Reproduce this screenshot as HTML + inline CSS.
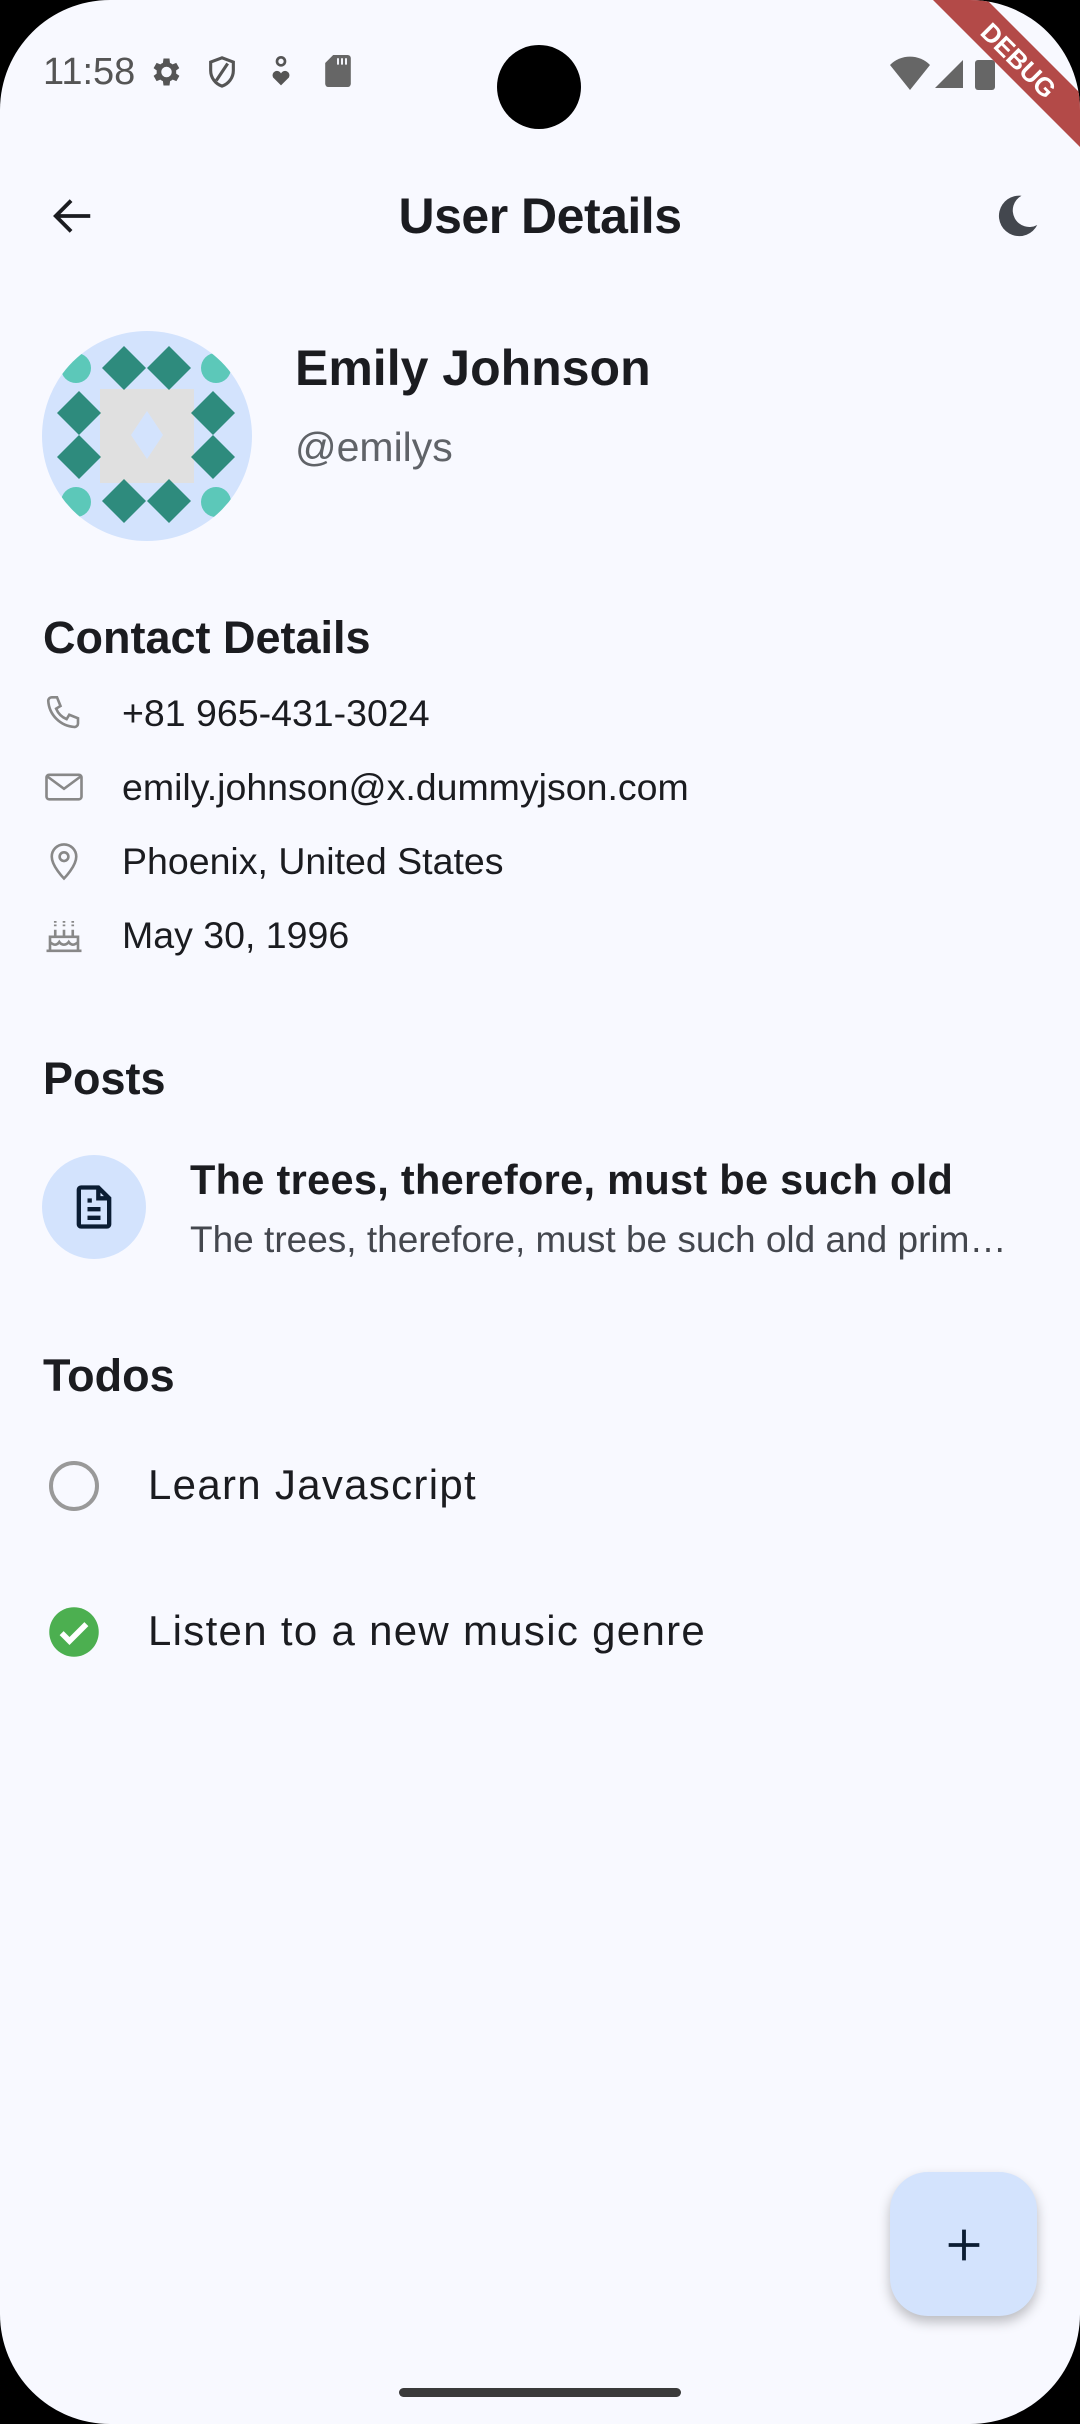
<!DOCTYPE html>
<html><head><meta charset="utf-8"><style>
*{margin:0;padding:0;box-sizing:border-box}
html,body{width:1080px;height:2424px;background:#000;overflow:hidden}
#s{position:absolute;left:0;top:0;width:1080px;height:2424px;background:#f8f9ff;border-radius:110px 110px 110px 110px;overflow:hidden;font-family:"Liberation Sans",Roboto,sans-serif;color:#1b1c20}
.a{position:absolute;white-space:nowrap}
.h{font-size:45px;font-weight:bold;left:43px}
.ct{left:122px;font-size:37.5px;color:#1b1c20}
.ic{position:absolute;left:43px}
</style></head><body><div id="s">
<div class="a" style="left:43px;top:51px;font-size:38px;color:#555">11:58</div>
<svg class="a" style="left:145px;top:54px" width="40" height="36" viewBox="0 0 24 24"><path fill="#555" d="M19.4 13a7.5 7.5 0 0 0 0-2l2.1-1.6-2-3.5-2.5 1a7 7 0 0 0-1.7-1L15 3h-4l-.4 2.9a7 7 0 0 0-1.7 1l-2.5-1-2 3.5L6.5 11a7.5 7.5 0 0 0 0 2l-2.1 1.6 2 3.5 2.5-1a7 7 0 0 0 1.7 1L11 21h4l.4-2.9a7 7 0 0 0 1.7-1l2.5 1 2-3.5zM13 15.5a3.5 3.5 0 1 1 0-7 3.5 3.5 0 0 1 0 7z"/></svg>
<svg class="a" style="left:205px;top:54px" width="34" height="36" viewBox="0 0 24 24"><path fill="none" stroke="#555" stroke-width="2.2" d="M12 2 4 5v6c0 5 3.4 9.5 8 11 4.6-1.5 8-6 8-11V5z M8 18 16 6"/></svg>
<svg class="a" style="left:270px;top:56px" width="22" height="32" viewBox="0 0 16 24"><circle cx="8" cy="4" r="3" fill="none" stroke="#555" stroke-width="2"/><path fill="#555" d="M8 22 2 16a3 3 0 0 1 6-3 3 3 0 0 1 6 3z"/></svg>
<svg class="a" style="left:325px;top:55px" width="26" height="32" viewBox="0 0 16 20"><path fill="#666" d="M5 0h9a2 2 0 0 1 2 2v16a2 2 0 0 1-2 2H2a2 2 0 0 1-2-2V5z"/><path stroke="#f8f9ff" stroke-width="1.2" d="M8 2v4M10.5 2v4M13 2v4"/></svg>
<div class="a" style="left:497px;top:45px;width:84px;height:84px;border-radius:50%;background:#000"></div>
<svg class="a" style="left:890px;top:54px" width="140" height="36" viewBox="0 0 140 36"><path fill="#666" d="M0 11a28 28 0 0 1 40 0L20 36z"/><path fill="#666" d="M45 34 73 6v28z"/><rect x="85" y="6" width="20" height="30" rx="3" fill="#666"/></svg>
<svg class="a" style="left:0;top:0" width="1080" height="200"><polygon points="933,0 987,0 1080,93 1080,147" fill="#b34a48"/><text x="1017" y="62" transform="rotate(45 1017 62)" text-anchor="middle" dominant-baseline="middle" font-family="Liberation Sans" font-weight="bold" font-size="26" fill="#fff">DEBUG</text></svg>
<svg class="a" style="left:50px;top:193px" width="46" height="46" viewBox="0 0 24 24"><path fill="none" stroke="#1b1c20" stroke-width="2" d="M21 12H4M11 4l-8 8 8 8"/></svg>
<div class="a" style="left:0;width:1080px;text-align:center;top:187px;font-size:50px;font-weight:bold;letter-spacing:-0.5px">User Details</div>
<svg class="a" style="left:990px;top:189px" width="54" height="54" viewBox="0 0 24 24"><path fill="#43474e" d="M14 3a9 9 0 1 0 7 13A7 7 0 0 1 14 3z"/></svg>
<svg class="a" style="left:42px;top:331px" width="210" height="210" viewBox="42 331 210 210"><defs><clipPath id="c"><circle cx="147" cy="436" r="105"/></clipPath></defs><circle cx="147" cy="436" r="105" fill="#d3e3fd"/><g clip-path="url(#c)"><g fill="#5cc8b9"><circle cx="76" cy="368" r="15"/><circle cx="216" cy="368" r="15"/><circle cx="76" cy="502" r="15"/><circle cx="216" cy="502" r="15"/></g><rect x="100" y="389" width="94" height="94" fill="#e0e0e0"/><polygon points="147,411 163,435 147,459 131,435" fill="#d3e3fd"/><g fill="#2e8b7d"><polygon points="124,346 146,368 124,390 102,368"/><polygon points="169,346 191,368 169,390 147,368"/><polygon points="124,479 146,501 124,523 102,501"/><polygon points="169,479 191,501 169,523 147,501"/><polygon points="79,391 101,413 79,435 57,413"/><polygon points="79,435 101,457 79,479 57,457"/><polygon points="213,391 235,413 213,435 191,413"/><polygon points="213,435 235,457 213,479 191,457"/></g></g></svg>
<div class="a" style="left:295px;top:339px;font-size:50px;font-weight:bold">Emily Johnson</div>
<div class="a" style="left:295px;top:424px;font-size:41px;color:#606368">@emilys</div>
<div class="a h" style="top:612px">Contact Details</div>
<svg class="ic" style="top:692px" width="42" height="42" viewBox="0 0 24 24"><path fill="none" stroke="#888" stroke-width="1.5" d="M5 3h3l2 5-2.5 1.5a11 11 0 0 0 6 6L15 13l5 2v3a2 2 0 0 1-2 2A16 16 0 0 1 3 5a2 2 0 0 1 2-2z"/></svg>
<div class="a ct" style="top:692px">+81 965-431-3024</div>
<svg class="ic" style="top:766px" width="42" height="42" viewBox="0 0 24 24"><rect x="2" y="5" width="20" height="14" rx="1.5" fill="none" stroke="#888" stroke-width="1.5"/><path fill="none" stroke="#888" stroke-width="1.5" d="m2.5 6 9.5 7 9.5-7"/></svg>
<div class="a ct" style="top:766px">emily.johnson@x.dummyjson.com</div>
<svg class="ic" style="top:840px" width="42" height="42" viewBox="0 0 24 24"><path fill="none" stroke="#888" stroke-width="1.5" d="M12 22s7-7 7-12.5a7 7 0 0 0-14 0C5 15 12 22 12 22z"/><circle cx="12" cy="9.5" r="2.5" fill="none" stroke="#888" stroke-width="1.5"/></svg>
<div class="a ct" style="top:840px">Phoenix, United States</div>
<svg class="ic" style="top:914px" width="42" height="42" viewBox="0 0 24 24"><path fill="none" stroke="#888" stroke-width="1.5" d="M2 21h20M4 21v-8h16v8M4 16c2 2 4 2 5.3 0 1.3 2 4 2 5.4 0 1.3 2 3.3 2 5.3 0M7 13V9M12 13V9M17 13V9"/><path stroke="#888" stroke-width="1.5" stroke-dasharray="1 1" d="M7 4v3M12 4v3M17 4v3"/></svg>
<div class="a ct" style="top:914px">May 30, 1996</div>
<div class="a h" style="top:1053px">Posts</div>
<div class="a" style="left:42px;top:1155px;width:104px;height:104px;border-radius:50%;background:#d3e3fd"></div>
<svg class="a" style="left:68px;top:1181px" width="52" height="52" viewBox="0 0 24 24"><path fill="none" stroke="#0b1d33" stroke-width="2" d="M6 3h8l5 5v12a1 1 0 0 1-1 1H6a1 1 0 0 1-1-1V4a1 1 0 0 1 1-1zM14 3v5h5M9 13h6M9 17h6M9 9h2"/></svg>
<div class="a" style="left:190px;top:1156px;font-size:41.5px;font-weight:bold;letter-spacing:0.3px">The trees, therefore, must be such old</div>
<div class="a" style="left:190px;top:1219px;font-size:37px;color:#44474e">The trees, therefore, must be such old and prim…</div>
<div class="a h" style="top:1350px">Todos</div>
<div class="a" style="left:49px;top:1461px;width:50px;height:50px;border-radius:50%;border:4px solid #999"></div>
<div class="a" style="left:148px;top:1461px;font-size:42px;letter-spacing:1.3px">Learn Javascript</div>
<svg class="a" style="left:47px;top:1605px" width="54" height="54" viewBox="0 0 24 24"><circle cx="12" cy="12" r="11" fill="#4caf50"/><path fill="none" stroke="#fff" stroke-width="2.5" d="m6.5 12.5 3.5 3.5 7.5-7.5"/></svg>
<div class="a" style="left:148px;top:1607px;font-size:42px;letter-spacing:1.3px">Listen to a new music genre</div>
<div class="a" style="left:890px;top:2172px;width:147px;height:144px;border-radius:38px;background:#d3e3fd;box-shadow:0 6px 12px rgba(0,0,0,0.25)"></div>
<svg class="a" style="left:941px;top:2222px" width="46" height="46" viewBox="0 0 24 24"><path stroke="#0b1d33" stroke-width="2" d="M12 4v16M4 12h16"/></svg>
<div class="a" style="left:399px;top:2388px;width:282px;height:9px;border-radius:5px;background:#3a3a3a"></div>
</div></body></html>
